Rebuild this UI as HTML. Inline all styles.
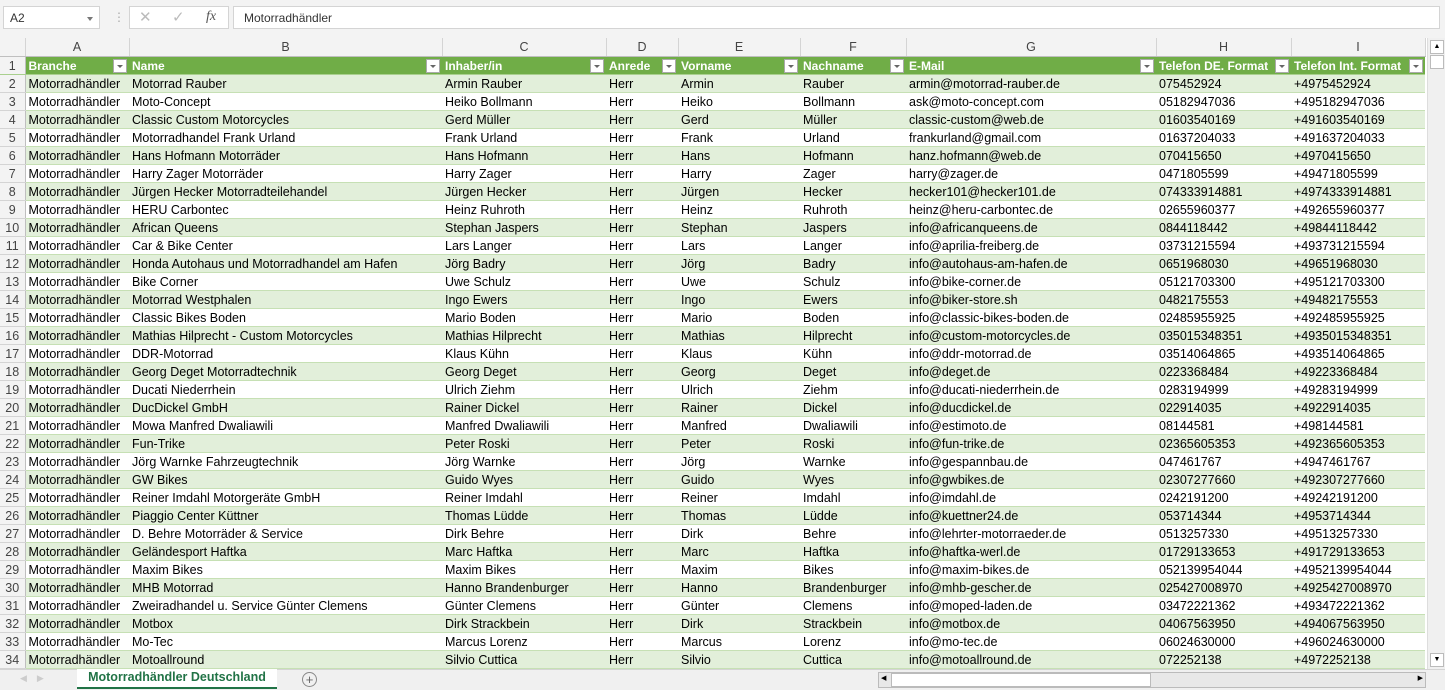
<!DOCTYPE html>
<html><head><meta charset="utf-8"><style>
*{box-sizing:border-box;margin:0;padding:0}
body{width:1445px;height:690px;overflow:hidden;background:#fff;font-family:"Liberation Sans",sans-serif;font-size:12.5px;color:#000;position:relative}
.top{position:absolute;left:0;top:0;width:1445px;height:38px;background:#f3f3f3}
.nb{position:absolute;left:3px;top:6px;width:97px;height:23px;background:#fff;border:1px solid #d4d4d4;font-size:12px;padding:4px 6px;color:#333}
.nb:after{content:"";position:absolute;right:6px;top:10px;border:3px solid transparent;border-top:4px solid #777}
.fxbtn{position:absolute;left:129px;top:6px;width:100px;height:23px;background:#fff;border:1px solid #d4d4d4;color:#bbb;font-size:15px}
.fb{position:absolute;left:233px;top:6px;width:1207px;height:23px;background:#fff;border:1px solid #d4d4d4;font-size:12px;padding:4px 10px;color:#333}
table{position:absolute;left:0;top:38px;border-collapse:collapse;table-layout:fixed}
td{height:18px;padding:1px 3px 0;white-space:nowrap;overflow:hidden;line-height:16px;border-bottom:1px solid #c6e0b4}
tr.ch td{background:#f3f3f3;color:#444;text-align:center;border-right:1px solid #d4d4d4;border-bottom:1px solid #bfbfbf;font-size:12.5px}
td.rh{background:#f3f3f3;color:#444;text-align:center;padding:1px 0 0;border-right:1px solid #bfbfbf;border-bottom:1px solid #d4d4d4}
tr.h td{background:#70ad47;color:#fff;font-weight:bold;font-size:12px;position:relative;border-bottom:1px solid #a9d08e}
tr.h td.rh{background:#f3f3f3;color:#444;font-weight:normal;font-size:12.5px}
tr.h td span{position:absolute;right:2px;top:2px;width:14px;height:14px;background:#fff;border:1px solid #aaa}
tr.h td span:after{content:"";position:absolute;left:3px;top:5px;border:3px solid transparent;border-top:3px solid #666}
tr:nth-child(odd):not(.h):not(.ch) td:not(.rh){background:#e2efda}
.vs{position:absolute;left:1427px;top:38px;width:18px;height:631px;background:#f0f0f0;border-left:1px solid #ddd}
.bot{position:absolute;left:0;top:669px;width:1445px;height:21px;background:#f0f0f0;border-top:1px solid #d4d4d4}
.tab{position:absolute;left:77px;top:-1px;width:200px;height:20px;background:#fff;border-bottom:2px solid #217346;color:#217346;font-weight:bold;text-align:center;font-size:12.5px;line-height:17px}
.hs{position:absolute;left:878px;top:2px;width:548px;height:16px;background:#e8e8e8;border:1px solid #bbb}
.hs div{position:absolute;left:12px;top:0;width:260px;height:14px;background:#fff;border:1px solid #bbb}
</style></head><body>
<div class="top">
<div class="nb">A2</div>
<div style="position:absolute;left:113px;top:10px;color:#aaa;font-size:12px">⋮</div>
<div class="fxbtn"><span style="position:absolute;left:9px;top:1px">✕</span><span style="position:absolute;left:42px;top:1px">✓</span><span style="position:absolute;left:76px;top:2px;color:#555;font-family:'Liberation Serif';font-style:italic;font-size:14px">fx</span></div>
<div class="fb">Motorradhändler</div>
</div>
<table>
<colgroup><col style="width:25px"><col style="width:104px"><col style="width:313px"><col style="width:164px"><col style="width:72px"><col style="width:122px"><col style="width:106px"><col style="width:250px"><col style="width:135px"><col style="width:134px"></colgroup>
<tr class="ch"><td style="background:#f3f3f3"></td><td>A</td><td>B</td><td>C</td><td>D</td><td>E</td><td>F</td><td>G</td><td>H</td><td>I</td></tr>
<tr class="h"><td class="rh">1</td><td>Branche<span></span></td><td>Name<span></span></td><td>Inhaber/in<span></span></td><td>Anrede<span></span></td><td>Vorname<span></span></td><td>Nachname<span></span></td><td>E-Mail<span></span></td><td>Telefon DE. Format<span></span></td><td>Telefon Int. Format<span></span></td></tr>
<tr><td class="rh">2</td><td>Motorradhändler</td><td>Motorrad Rauber</td><td>Armin Rauber</td><td>Herr</td><td>Armin</td><td>Rauber</td><td>armin@motorrad-rauber.de</td><td>075452924</td><td>+4975452924</td></tr>
<tr><td class="rh">3</td><td>Motorradhändler</td><td>Moto-Concept</td><td>Heiko Bollmann</td><td>Herr</td><td>Heiko</td><td>Bollmann</td><td>ask@moto-concept.com</td><td>05182947036</td><td>+495182947036</td></tr>
<tr><td class="rh">4</td><td>Motorradhändler</td><td>Classic Custom Motorcycles</td><td>Gerd Müller</td><td>Herr</td><td>Gerd</td><td>Müller</td><td>classic-custom@web.de</td><td>01603540169</td><td>+491603540169</td></tr>
<tr><td class="rh">5</td><td>Motorradhändler</td><td>Motorradhandel Frank Urland</td><td>Frank Urland</td><td>Herr</td><td>Frank</td><td>Urland</td><td>frankurland@gmail.com</td><td>01637204033</td><td>+491637204033</td></tr>
<tr><td class="rh">6</td><td>Motorradhändler</td><td>Hans Hofmann Motorräder</td><td>Hans Hofmann</td><td>Herr</td><td>Hans</td><td>Hofmann</td><td>hanz.hofmann@web.de</td><td>070415650</td><td>+4970415650</td></tr>
<tr><td class="rh">7</td><td>Motorradhändler</td><td>Harry Zager Motorräder</td><td>Harry Zager</td><td>Herr</td><td>Harry</td><td>Zager</td><td>harry@zager.de</td><td>0471805599</td><td>+49471805599</td></tr>
<tr><td class="rh">8</td><td>Motorradhändler</td><td>Jürgen Hecker Motorradteilehandel</td><td>Jürgen Hecker</td><td>Herr</td><td>Jürgen</td><td>Hecker</td><td>hecker101@hecker101.de</td><td>074333914881</td><td>+4974333914881</td></tr>
<tr><td class="rh">9</td><td>Motorradhändler</td><td>HERU Carbontec</td><td>Heinz Ruhroth</td><td>Herr</td><td>Heinz</td><td>Ruhroth</td><td>heinz@heru-carbontec.de</td><td>02655960377</td><td>+492655960377</td></tr>
<tr><td class="rh">10</td><td>Motorradhändler</td><td>African Queens</td><td>Stephan Jaspers</td><td>Herr</td><td>Stephan</td><td>Jaspers</td><td>info@africanqueens.de</td><td>0844118442</td><td>+49844118442</td></tr>
<tr><td class="rh">11</td><td>Motorradhändler</td><td>Car &amp; Bike Center</td><td>Lars Langer</td><td>Herr</td><td>Lars</td><td>Langer</td><td>info@aprilia-freiberg.de</td><td>03731215594</td><td>+493731215594</td></tr>
<tr><td class="rh">12</td><td>Motorradhändler</td><td>Honda Autohaus und Motorradhandel am Hafen</td><td>Jörg Badry</td><td>Herr</td><td>Jörg</td><td>Badry</td><td>info@autohaus-am-hafen.de</td><td>0651968030</td><td>+49651968030</td></tr>
<tr><td class="rh">13</td><td>Motorradhändler</td><td>Bike Corner</td><td>Uwe Schulz</td><td>Herr</td><td>Uwe</td><td>Schulz</td><td>info@bike-corner.de</td><td>05121703300</td><td>+495121703300</td></tr>
<tr><td class="rh">14</td><td>Motorradhändler</td><td>Motorrad Westphalen</td><td>Ingo Ewers</td><td>Herr</td><td>Ingo</td><td>Ewers</td><td>info@biker-store.sh</td><td>0482175553</td><td>+49482175553</td></tr>
<tr><td class="rh">15</td><td>Motorradhändler</td><td>Classic Bikes Boden</td><td>Mario Boden</td><td>Herr</td><td>Mario</td><td>Boden</td><td>info@classic-bikes-boden.de</td><td>02485955925</td><td>+492485955925</td></tr>
<tr><td class="rh">16</td><td>Motorradhändler</td><td>Mathias Hilprecht - Custom Motorcycles</td><td>Mathias Hilprecht</td><td>Herr</td><td>Mathias</td><td>Hilprecht</td><td>info@custom-motorcycles.de</td><td>035015348351</td><td>+4935015348351</td></tr>
<tr><td class="rh">17</td><td>Motorradhändler</td><td>DDR-Motorrad</td><td>Klaus Kühn</td><td>Herr</td><td>Klaus</td><td>Kühn</td><td>info@ddr-motorrad.de</td><td>03514064865</td><td>+493514064865</td></tr>
<tr><td class="rh">18</td><td>Motorradhändler</td><td>Georg Deget Motorradtechnik</td><td>Georg Deget</td><td>Herr</td><td>Georg</td><td>Deget</td><td>info@deget.de</td><td>0223368484</td><td>+49223368484</td></tr>
<tr><td class="rh">19</td><td>Motorradhändler</td><td>Ducati Niederrhein</td><td>Ulrich Ziehm</td><td>Herr</td><td>Ulrich</td><td>Ziehm</td><td>info@ducati-niederrhein.de</td><td>0283194999</td><td>+49283194999</td></tr>
<tr><td class="rh">20</td><td>Motorradhändler</td><td>DucDickel GmbH</td><td>Rainer Dickel</td><td>Herr</td><td>Rainer</td><td>Dickel</td><td>info@ducdickel.de</td><td>022914035</td><td>+4922914035</td></tr>
<tr><td class="rh">21</td><td>Motorradhändler</td><td>Mowa Manfred Dwaliawili</td><td>Manfred Dwaliawili</td><td>Herr</td><td>Manfred</td><td>Dwaliawili</td><td>info@estimoto.de</td><td>08144581</td><td>+498144581</td></tr>
<tr><td class="rh">22</td><td>Motorradhändler</td><td>Fun-Trike</td><td>Peter Roski</td><td>Herr</td><td>Peter</td><td>Roski</td><td>info@fun-trike.de</td><td>02365605353</td><td>+492365605353</td></tr>
<tr><td class="rh">23</td><td>Motorradhändler</td><td>Jörg Warnke Fahrzeugtechnik</td><td>Jörg Warnke</td><td>Herr</td><td>Jörg</td><td>Warnke</td><td>info@gespannbau.de</td><td>047461767</td><td>+4947461767</td></tr>
<tr><td class="rh">24</td><td>Motorradhändler</td><td>GW Bikes</td><td>Guido Wyes</td><td>Herr</td><td>Guido</td><td>Wyes</td><td>info@gwbikes.de</td><td>02307277660</td><td>+492307277660</td></tr>
<tr><td class="rh">25</td><td>Motorradhändler</td><td>Reiner Imdahl Motorgeräte GmbH</td><td>Reiner Imdahl</td><td>Herr</td><td>Reiner</td><td>Imdahl</td><td>info@imdahl.de</td><td>0242191200</td><td>+49242191200</td></tr>
<tr><td class="rh">26</td><td>Motorradhändler</td><td>Piaggio Center Küttner</td><td>Thomas Lüdde</td><td>Herr</td><td>Thomas</td><td>Lüdde</td><td>info@kuettner24.de</td><td>053714344</td><td>+4953714344</td></tr>
<tr><td class="rh">27</td><td>Motorradhändler</td><td>D. Behre Motorräder &amp; Service</td><td>Dirk Behre</td><td>Herr</td><td>Dirk</td><td>Behre</td><td>info@lehrter-motorraeder.de</td><td>0513257330</td><td>+49513257330</td></tr>
<tr><td class="rh">28</td><td>Motorradhändler</td><td>Geländesport Haftka</td><td>Marc Haftka</td><td>Herr</td><td>Marc</td><td>Haftka</td><td>info@haftka-werl.de</td><td>01729133653</td><td>+491729133653</td></tr>
<tr><td class="rh">29</td><td>Motorradhändler</td><td>Maxim Bikes</td><td>Maxim Bikes</td><td>Herr</td><td>Maxim</td><td>Bikes</td><td>info@maxim-bikes.de</td><td>052139954044</td><td>+4952139954044</td></tr>
<tr><td class="rh">30</td><td>Motorradhändler</td><td>MHB Motorrad</td><td>Hanno Brandenburger</td><td>Herr</td><td>Hanno</td><td>Brandenburger</td><td>info@mhb-gescher.de</td><td>025427008970</td><td>+4925427008970</td></tr>
<tr><td class="rh">31</td><td>Motorradhändler</td><td>Zweiradhandel u. Service Günter Clemens</td><td>Günter Clemens</td><td>Herr</td><td>Günter</td><td>Clemens</td><td>info@moped-laden.de</td><td>03472221362</td><td>+493472221362</td></tr>
<tr><td class="rh">32</td><td>Motorradhändler</td><td>Motbox</td><td>Dirk Strackbein</td><td>Herr</td><td>Dirk</td><td>Strackbein</td><td>info@motbox.de</td><td>04067563950</td><td>+494067563950</td></tr>
<tr><td class="rh">33</td><td>Motorradhändler</td><td>Mo-Tec</td><td>Marcus Lorenz</td><td>Herr</td><td>Marcus</td><td>Lorenz</td><td>info@mo-tec.de</td><td>06024630000</td><td>+496024630000</td></tr>
<tr><td class="rh">34</td><td>Motorradhändler</td><td>Motoallround</td><td>Silvio Cuttica</td><td>Herr</td><td>Silvio</td><td>Cuttica</td><td>info@motoallround.de</td><td>072252138</td><td>+4972252138</td></tr>
</table>
<div class="vs"><div style="position:absolute;left:2px;top:2px;width:14px;height:14px;background:#fff;border:1px solid #bbb;font-size:7px;text-align:center;line-height:12px">▲</div><div style="position:absolute;left:2px;top:17px;width:14px;height:14px;background:#fff;border:1px solid #bbb"></div><div style="position:absolute;left:2px;bottom:2px;width:14px;height:14px;background:#fff;border:1px solid #bbb;font-size:7px;text-align:center;line-height:12px">▼</div></div>
<div class="bot">
<span style="position:absolute;left:20px;top:3px;color:#ccc;font-size:9px">◀ &nbsp;&nbsp; ▶</span>
<div class="tab">Motorradhändler Deutschland</div>
<span style="position:absolute;left:302px;top:2px;width:15px;height:15px;border:1px solid #888;border-radius:50%;text-align:center;line-height:13px;color:#666;font-size:13px">+</span>
<div class="hs"><div></div><span style="position:absolute;left:2px;top:1px;font-size:7px">◀</span><span style="position:absolute;right:2px;top:1px;font-size:7px">▶</span></div>
</div>
</body></html>
